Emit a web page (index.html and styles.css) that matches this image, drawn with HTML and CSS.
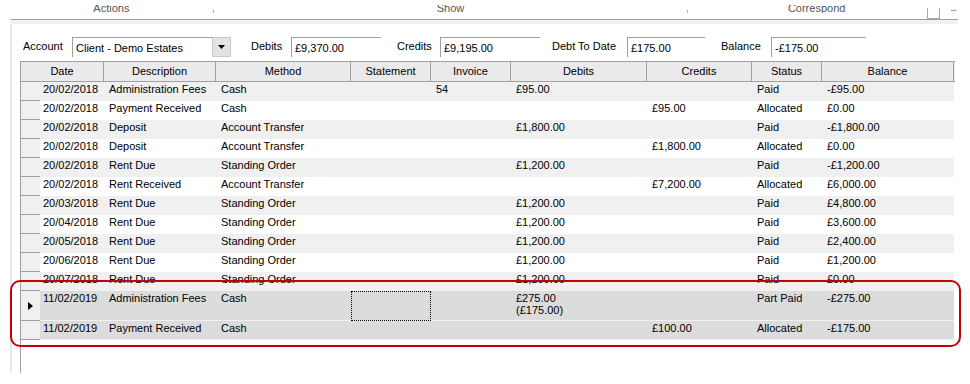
FILE: index.html
```html
<!DOCTYPE html>
<html lang="en">
<head>
  <meta charset="UTF-8" />
  <title>Account Transactions</title>
  <link rel="stylesheet" href="styles.css">
</head>
<body>

<div class="ribbon">
  <div class="ribbon-group g-actions"><span>Actions</span></div>
  <div class="tick"></div>
  <div class="ribbon-group g-show"><span>Show</span></div>
  <div class="tick"></div>
  <div class="ribbon-group g-correspond"><span>Correspond</span></div>
  <div class="ribbon-check"></div>
  <div class="ribbon-more">&#8596;</div>
</div>

<div class="panel">
  <div class="panel-band"></div>

  <div class="filters">
    <div class="lbl l-account">Account</div>
    <div class="combo">
      <div class="box combo-text">Client - Demo Estates</div>
      <div class="drop">
        <svg width="7" height="4" viewBox="0 0 7 4"><polygon points="0,0 7,0 3.5,4" fill="#000"/></svg>
      </div>
    </div>
    <div class="lbl l-debits">Debits</div>
    <div class="box b-debits">£9,370.00</div>
    <div class="lbl l-credits">Credits</div>
    <div class="box b-credits">£9,195.00</div>
    <div class="lbl l-debt">Debt To Date</div>
    <div class="box b-debt">£175.00</div>
    <div class="lbl l-balance">Balance</div>
    <div class="box b-balance">-£175.00</div>
  </div>

  <div class="grid">
    <div class="head">
      <div>Date</div>
      <div>Description</div>
      <div>Method</div>
      <div>Statement</div>
      <div>Invoice</div>
      <div>Debits</div>
      <div>Credits</div>
      <div>Status</div>
      <div>Balance</div>
    </div>

    <div class="row alt">
      <div class="rh"></div><div class="date">20/02/2018</div><div>Administration Fees</div><div>Cash</div><div></div><div>54</div><div>£95.00</div><div></div><div>Paid</div><div>-£95.00</div>
    </div>
    <div class="row">
      <div class="rh"></div><div class="date">20/02/2018</div><div>Payment Received</div><div>Cash</div><div></div><div></div><div></div><div>£95.00</div><div>Allocated</div><div>£0.00</div>
    </div>
    <div class="row alt">
      <div class="rh"></div><div class="date">20/02/2018</div><div>Deposit</div><div>Account Transfer</div><div></div><div></div><div>£1,800.00</div><div></div><div>Paid</div><div>-£1,800.00</div>
    </div>
    <div class="row">
      <div class="rh"></div><div class="date">20/02/2018</div><div>Deposit</div><div>Account Transfer</div><div></div><div></div><div></div><div>£1,800.00</div><div>Allocated</div><div>£0.00</div>
    </div>
    <div class="row alt">
      <div class="rh"></div><div class="date">20/02/2018</div><div>Rent Due</div><div>Standing Order</div><div></div><div></div><div>£1,200.00</div><div></div><div>Paid</div><div>-£1,200.00</div>
    </div>
    <div class="row">
      <div class="rh"></div><div class="date">20/02/2018</div><div>Rent Received</div><div>Account Transfer</div><div></div><div></div><div></div><div>£7,200.00</div><div>Allocated</div><div>£6,000.00</div>
    </div>
    <div class="row alt">
      <div class="rh"></div><div class="date">20/03/2018</div><div>Rent Due</div><div>Standing Order</div><div></div><div></div><div>£1,200.00</div><div></div><div>Paid</div><div>£4,800.00</div>
    </div>
    <div class="row">
      <div class="rh"></div><div class="date">20/04/2018</div><div>Rent Due</div><div>Standing Order</div><div></div><div></div><div>£1,200.00</div><div></div><div>Paid</div><div>£3,600.00</div>
    </div>
    <div class="row alt">
      <div class="rh"></div><div class="date">20/05/2018</div><div>Rent Due</div><div>Standing Order</div><div></div><div></div><div>£1,200.00</div><div></div><div>Paid</div><div>£2,400.00</div>
    </div>
    <div class="row">
      <div class="rh"></div><div class="date">20/06/2018</div><div>Rent Due</div><div>Standing Order</div><div></div><div></div><div>£1,200.00</div><div></div><div>Paid</div><div>£1,200.00</div>
    </div>
    <div class="row alt">
      <div class="rh"></div><div class="date">20/07/2018</div><div>Rent Due</div><div>Standing Order</div><div></div><div></div><div>£1,200.00</div><div></div><div>Paid</div><div>£0.00</div>
    </div>
    <div class="row sel tall">
      <div class="rh current">
        <svg width="5" height="8" viewBox="0 0 5 8"><polygon points="0,0 5,4 0,8" fill="#000"/></svg>
      </div><div class="date">11/02/2019</div><div>Administration Fees</div><div>Cash</div><div class="focus"></div><div></div><div>£275.00<br>(£175.00)</div><div></div><div>Part Paid</div><div>-£275.00</div>
    </div>
    <div class="row sel">
      <div class="rh"></div><div class="date">11/02/2019</div><div>Payment Received</div><div>Cash</div><div></div><div></div><div></div><div>£100.00</div><div>Allocated</div><div>-£175.00</div>
    </div>
  </div>
</div>

<!-- annotation round the new rows -->
<div class="callout"></div>

</body>
</html>
```

FILE: styles.css
```css
* {
  box-sizing: border-box;
}

body {
  margin: 0;
  width: 970px;
  height: 384px;
  position: relative;
  overflow: hidden;
  font-family: "Liberation Sans", Arial, sans-serif;
  font-size: 11px;
  color: #000;
  background: #fff;
}

/* === top ribbon (cut off) === */
.ribbon {
  display: flex;
  align-items: flex-start;
  height: 19px;
  margin-left: 10px;
  width: 948px;
}

.ribbon-group {
  height: 8px;
  margin-top: 5px;
  overflow: hidden;
  text-align: center;
  color: #555;
}

.ribbon-group span {
  display: block;
  line-height: 12px;
  margin-top: -3px;
}

.g-actions { width: 203px; }
.g-show { width: 474px; }
.g-correspond { width: 239px; padding-left: 18px; }

.tick {
  width: 1px;
  height: 3px;
  margin-top: 10px;
  background: #b0b0b0;
}

.ribbon-check {
  width: 13px;
  height: 11px;
  margin-top: 8px;
  border: 1px solid #a8a8a8;
  border-top: none;
}

.ribbon-more {
  margin: 4px 0 0 9px;
  font-size: 9px;
  line-height: 10px;
  color: #777;
}

/* === panel === */
.panel {
  display: flex;
  flex-direction: column;
  margin-left: 10px;
  width: 948px;
  height: 354px;
  border-top: 1px solid #a0a0a0;
  border-left: 2px solid #e6e6e6;
}

.panel-band {
  height: 4px;
  margin-left: -2px;
  background: #f0f0f0;
}

.filters {
  display: flex;
  align-items: center;
  height: 20px;
  margin-top: 13px;
  padding-left: 11px;
}

.lbl {
  margin-bottom: 2px;
  white-space: nowrap;
}

.l-account { width: 49px; }
.l-debits { width: 40px; margin-left: 20px; }
.l-credits { width: 43px; margin-left: 16px; }
.l-debt { width: 75px; margin-left: 12px; }
.l-balance { width: 50px; margin-left: 16px; }

.box {
  height: 20px;
  padding: 1px 0 0 3px;
  line-height: 19px;
  border-top: 1px solid #a0a0a0;
  border-left: 1px solid #a0a0a0;
  white-space: nowrap;
  background: #fff;
}

.combo {
  display: flex;
  width: 159px;
}

.combo-text { flex: 1; }

.drop {
  width: 19px;
  height: 20px;
  display: flex;
  align-items: center;
  justify-content: center;
  background: #e3e3e3;
  border: 1px solid #c9c9c9;
}

.b-debits { width: 90px; }
.b-credits { width: 100px; }
.b-debt { width: 78px; }
.b-balance { width: 95px; }

/* === data grid === */
.grid {
  flex: 1;
  width: 935px;
  margin: 4px 0 0 8px;
  border-left: 1px solid #a0a0a0;
}

.head {
  display: grid;
  grid-template-columns: 83px 112px 135px 80px 80px 136px 105px 70px 132px;
  height: 21px;
  background: #eaeaea;
  border-top: 1px solid #a0a0a0;
  border-bottom: 1px solid #a0a0a0;
}

.head > div {
  text-align: center;
  line-height: 19px;
  border-right: 1px solid #a0a0a0;
}

.row {
  display: grid;
  grid-template-columns: 19px 64px 112px 135px 80px 80px 136px 105px 70px 132px;
  min-height: 19px;
}

.row > div {
  padding: 1px 0 0 5px;
  line-height: 12px;
  white-space: nowrap;
  overflow: hidden;
  border-bottom: 1px solid transparent;
}

.row > .date {
  padding-left: 3px;
}

.row.alt > div {
  background: #f0f0f0;
}

.row.sel > div {
  background: #dcdcdc;
  border-bottom-color: #f2f2f2;
}

.row.tall {
  min-height: 30px;
}

.row > .rh,
.row.sel > .rh {
  padding: 0;
  background: #f0f0f0;
  border-bottom-color: #a0a0a0;
}

.rh.current {
  display: flex;
  align-items: center;
  justify-content: center;
}

.focus {
  outline: 1px dotted #000;
  outline-offset: -1px;
}

.callout {
  position: absolute;
  left: 10px;
  top: 280px;
  width: 951px;
  height: 67px;
  border: 2px solid #c4000b;
  border-radius: 10px;
}
```
